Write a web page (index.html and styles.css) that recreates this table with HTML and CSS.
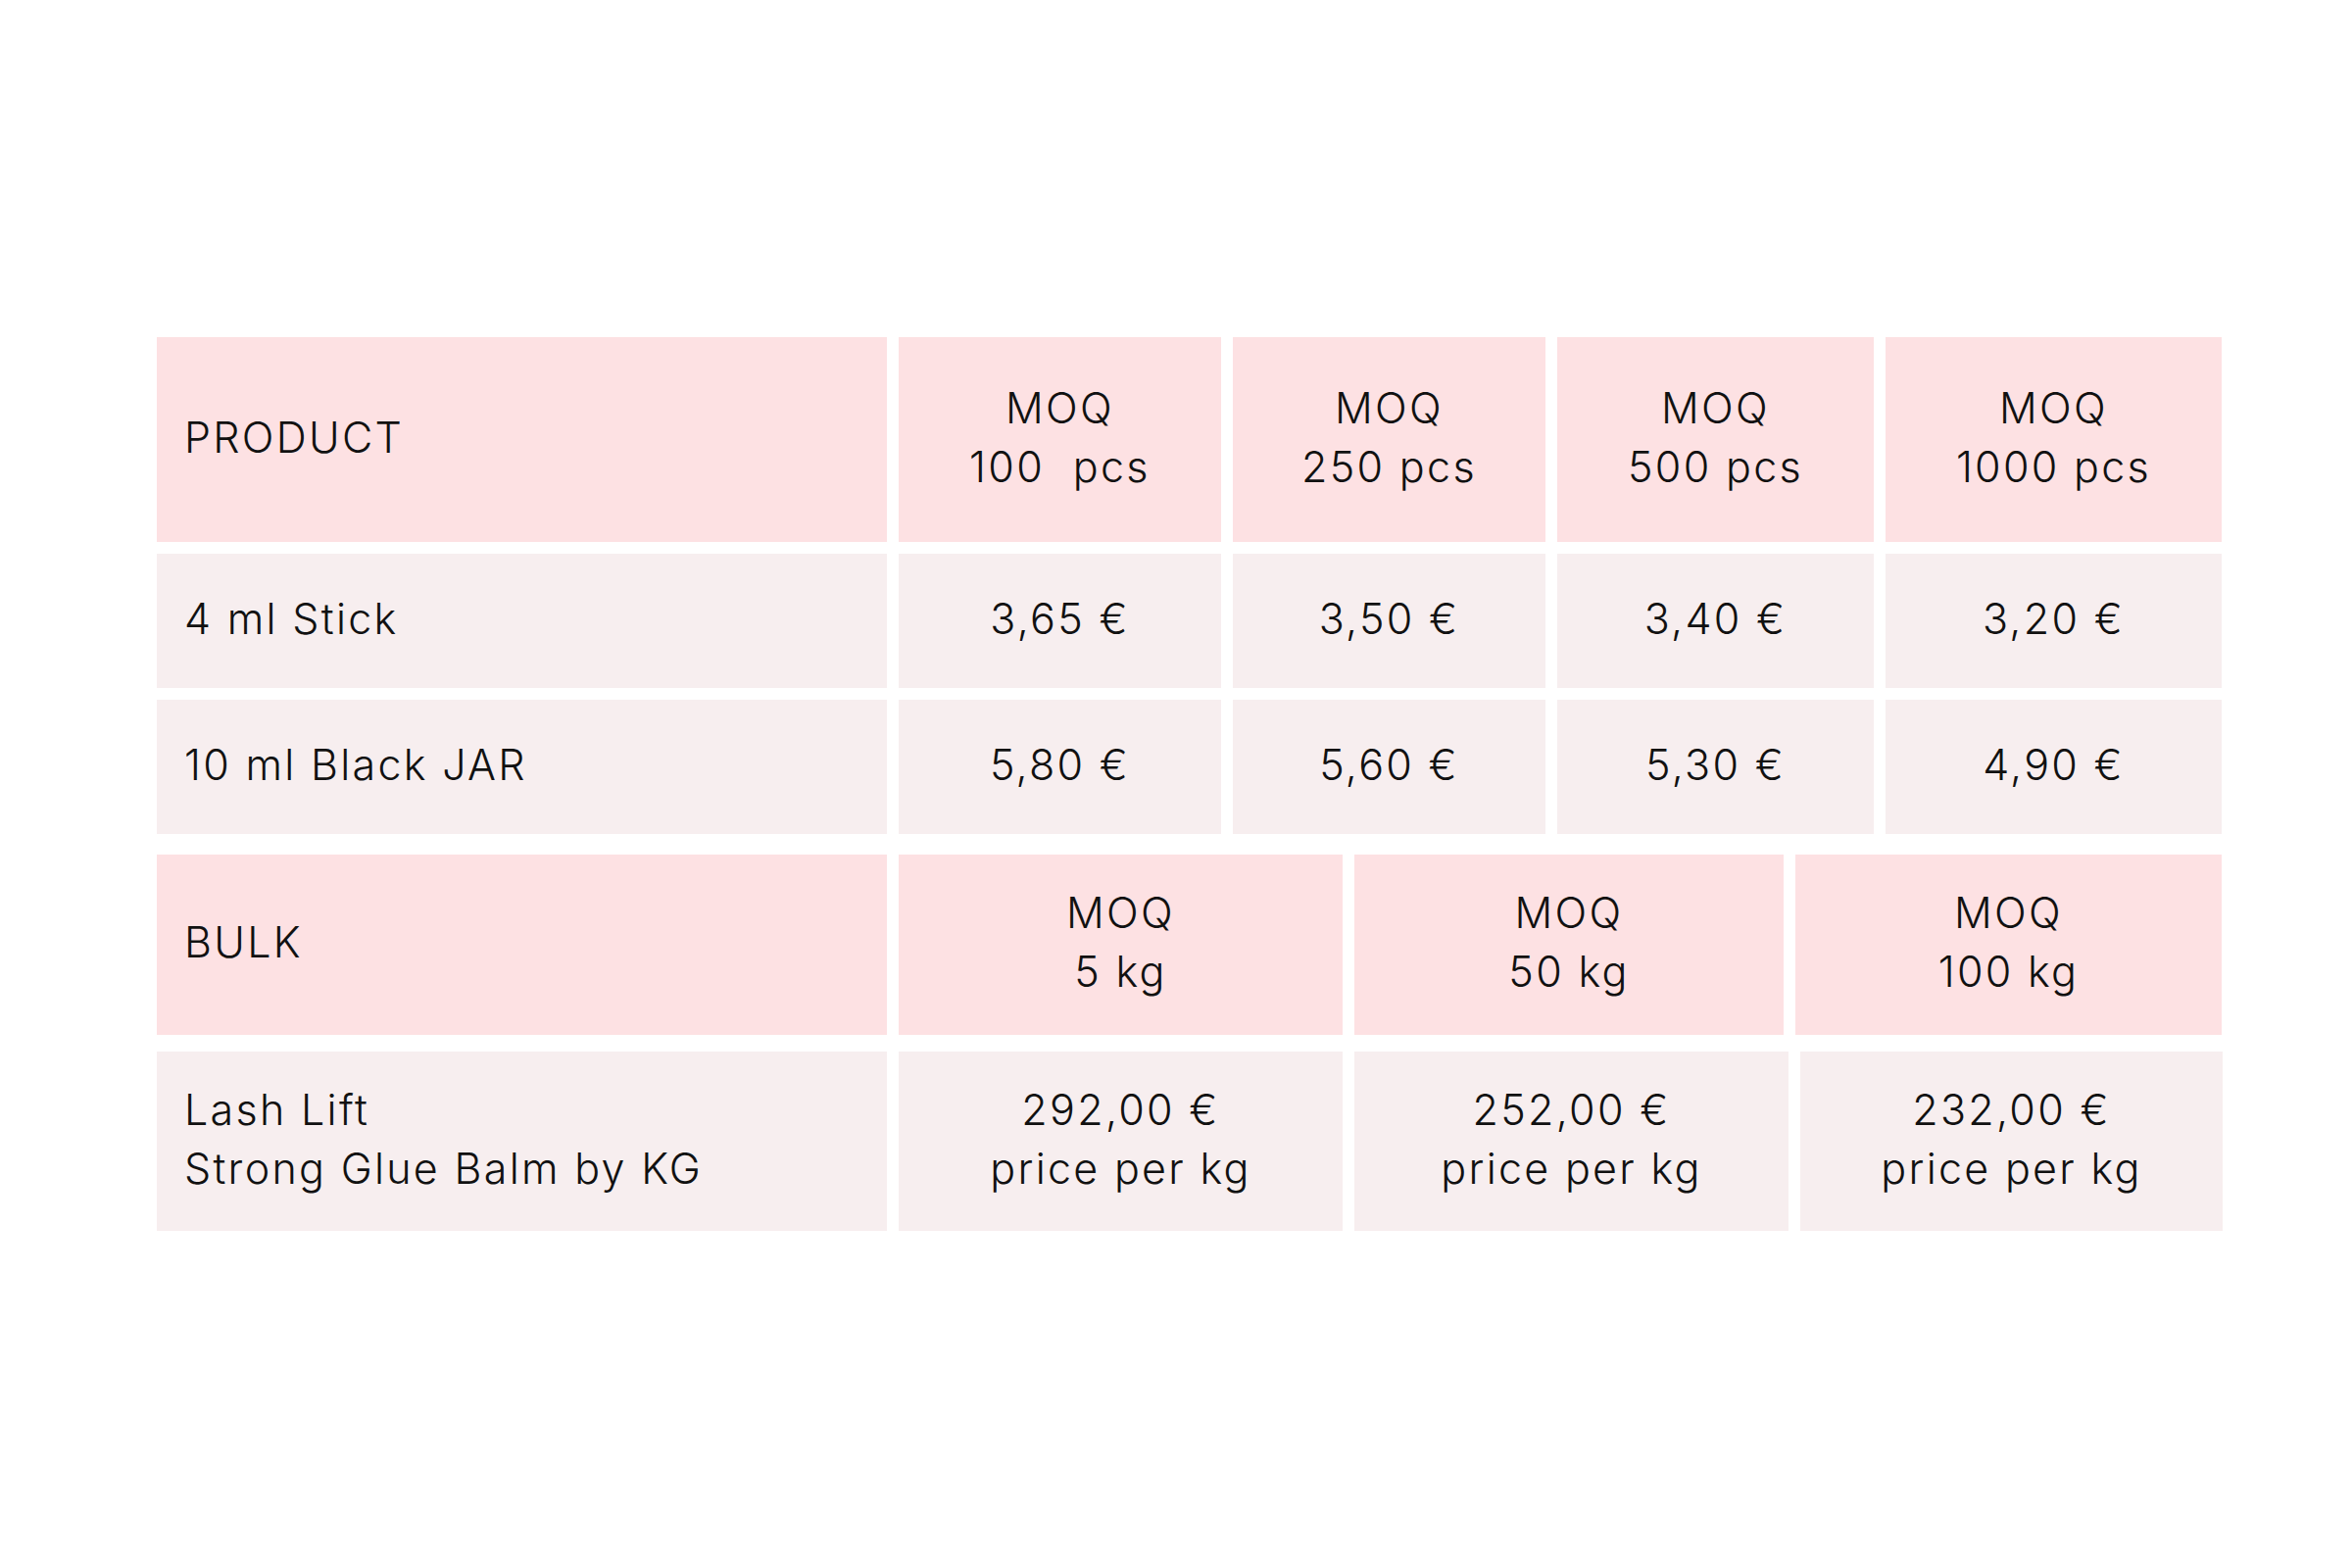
FILE: index.html
```html
<!DOCTYPE html>
<html lang="en">
<head>
<meta charset="utf-8">
<title>Price table</title>
<link rel="stylesheet" href="styles.css">
</head>
<body>
<div class="page">
  <div class="table">
    <div class="section section-pcs">
      <div class="row grid-pcs head">
        <div class="cell label">PRODUCT</div>
        <div class="cell">MOQ<br>100&nbsp; pcs</div>
        <div class="cell">MOQ<br>250 pcs</div>
        <div class="cell">MOQ<br>500 pcs</div>
        <div class="cell">MOQ<br>1000 pcs</div>
      </div>
      <div class="row grid-pcs body">
        <div class="cell label">4 ml Stick</div>
        <div class="cell">3,65 €</div>
        <div class="cell">3,50 €</div>
        <div class="cell">3,40 €</div>
        <div class="cell">3,20 €</div>
      </div>
      <div class="row grid-pcs body">
        <div class="cell label">10 ml Black JAR</div>
        <div class="cell">5,80 €</div>
        <div class="cell">5,60 €</div>
        <div class="cell">5,30 €</div>
        <div class="cell">4,90 €</div>
      </div>
    </div>
    <div class="section section-bulk">
      <div class="row grid-bulk-head head">
        <div class="cell label">BULK</div>
        <div class="cell">MOQ<br>5 kg</div>
        <div class="cell">MOQ<br>50 kg</div>
        <div class="cell">MOQ<br>100 kg</div>
      </div>
      <div class="row grid-bulk-body body tall">
        <div class="cell label">Lash Lift<br>Strong Glue Balm by KG</div>
        <div class="cell">292,00 €<br>price per kg</div>
        <div class="cell">252,00 €<br>price per kg</div>
        <div class="cell">232,00 €<br>price per kg</div>
      </div>
    </div>
  </div>
</div>
</body>
</html>
```

FILE: styles.css
```css
html, body {
  margin: 0;
  padding: 0;
  background: #ffffff;
}

.page {
  width: 2400px;
  height: 1600px;
  padding: 344px 0 0 160px;
  box-sizing: border-box;
}

.table {
  width: 2108px;
  display: flex;
  flex-direction: column;
  gap: 21px;
  font-family: "Inter", "Liberation Sans", sans-serif;
  font-weight: 300;
  font-size: 43px;
  line-height: 60px;
  letter-spacing: 2.3px;
  color: #111111;
}

.section {
  display: flex;
  flex-direction: column;
}

.section-pcs {
  gap: 12px;
}

.section-bulk {
  gap: 17px;
}

.row {
  display: grid;
  column-gap: 12px;
}

.grid-pcs {
  grid-template-columns: 745px 329px 319px 323px 343px;
}

.grid-bulk-head {
  grid-template-columns: 745px 453px 438px 435px;
}

.grid-bulk-body {
  grid-template-columns: 745px 453px 443px 431px;
}

.section-pcs .head {
  height: 209px;
}

.section-pcs .body {
  height: 137px;
}

.section-bulk .head {
  height: 184px;
}

.section-bulk .body {
  height: 183px;
}

.cell {
  display: flex;
  align-items: center;
  justify-content: center;
  text-align: center;
  padding-bottom: 6px;
  box-sizing: border-box;
}

.label {
  justify-content: flex-start;
  text-align: left;
  padding-left: 28px;
}

.head .cell {
  background: #fde1e3;
}

.body .cell {
  background: #f7eeef;
}
```
